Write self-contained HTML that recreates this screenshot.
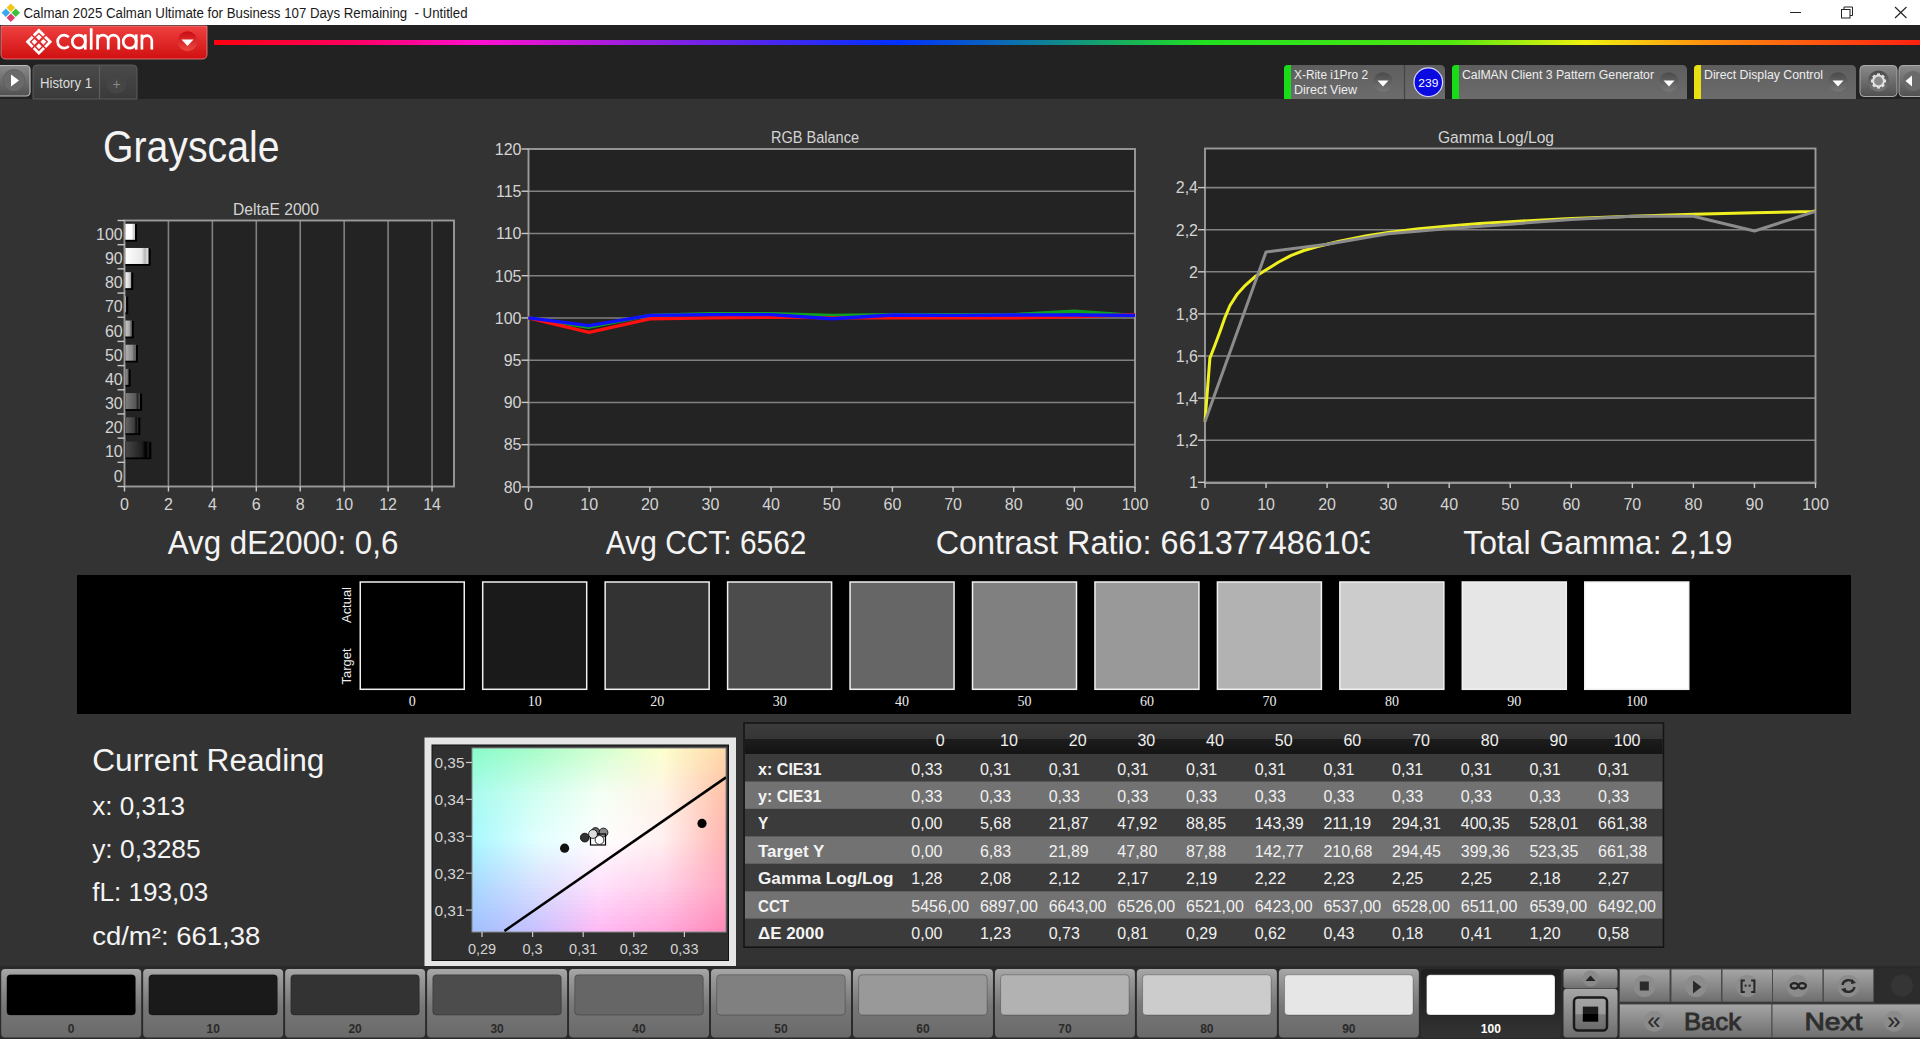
<!DOCTYPE html><html><head><meta charset="utf-8"><title>Calman</title><style>html,body{margin:0;padding:0;background:#333;overflow:hidden;width:1920px;height:1039px}svg{display:block;font-family:"Liberation Sans",sans-serif}</style></head><body><svg width="1920" height="1039" viewBox="0 0 1920 1039" font-family="'Liberation Sans', sans-serif"><defs><linearGradient id="ddred" x1="0" y1="0" x2="0" y2="1"><stop offset="0" stop-color="#c80c14"/><stop offset="1" stop-color="#ec4a40"/></linearGradient><linearGradient id="redg" x1="0" y1="0" x2="0" y2="1"><stop offset="0" stop-color="#ee4040"/><stop offset="0.5" stop-color="#e02828"/><stop offset="1" stop-color="#d01010"/></linearGradient><linearGradient id="rainbow" x1="0" y1="0" x2="1" y2="0"><stop offset="0" stop-color="#ff0010"/><stop offset="0.08" stop-color="#ff0060"/><stop offset="0.156" stop-color="#ff10d0"/><stop offset="0.256" stop-color="#9020e0"/><stop offset="0.4" stop-color="#0030ff"/><stop offset="0.494" stop-color="#108890"/><stop offset="0.58" stop-color="#20e020"/><stop offset="0.724" stop-color="#50e810"/><stop offset="0.804" stop-color="#f0f010"/><stop offset="0.875" stop-color="#ff9010"/><stop offset="1" stop-color="#ff2010"/></linearGradient><linearGradient id="btng" x1="0" y1="0" x2="0" y2="1"><stop offset="0" stop-color="#8a8a8a"/><stop offset="1" stop-color="#505050"/></linearGradient><linearGradient id="tabg" x1="0" y1="0" x2="0" y2="1"><stop offset="0" stop-color="#4a4a4a"/><stop offset="1" stop-color="#3a3a3a"/></linearGradient><linearGradient id="devg" x1="0" y1="0" x2="0" y2="1"><stop offset="0" stop-color="#5e5e5e"/><stop offset="1" stop-color="#6c6c6c"/></linearGradient><linearGradient id="ddg" x1="0" y1="0" x2="0" y2="1"><stop offset="0" stop-color="#4a4a4a"/><stop offset="1" stop-color="#777777"/></linearGradient><linearGradient id="bar100" x1="0" y1="0" x2="1" y2="0"><stop offset="0" stop-color="rgb(255,255,255)"/><stop offset="0.7" stop-color="rgb(255,255,255)"/><stop offset="0.85" stop-color="rgb(205,205,205)"/><stop offset="1" stop-color="rgb(255,255,255)"/></linearGradient><linearGradient id="bar90" x1="0" y1="0" x2="1" y2="0"><stop offset="0" stop-color="rgb(255,255,255)"/><stop offset="0.7" stop-color="rgb(232,232,232)"/><stop offset="0.85" stop-color="rgb(182,182,182)"/><stop offset="1" stop-color="rgb(232,232,232)"/></linearGradient><linearGradient id="bar80" x1="0" y1="0" x2="1" y2="0"><stop offset="0" stop-color="rgb(249,249,249)"/><stop offset="0.7" stop-color="rgb(209,209,209)"/><stop offset="0.85" stop-color="rgb(159,159,159)"/><stop offset="1" stop-color="rgb(209,209,209)"/></linearGradient><linearGradient id="bar70" x1="0" y1="0" x2="1" y2="0"><stop offset="0" stop-color="rgb(225,225,225)"/><stop offset="0.7" stop-color="rgb(185,185,185)"/><stop offset="0.85" stop-color="rgb(135,135,135)"/><stop offset="1" stop-color="rgb(185,185,185)"/></linearGradient><linearGradient id="bar60" x1="0" y1="0" x2="1" y2="0"><stop offset="0" stop-color="rgb(201,201,201)"/><stop offset="0.7" stop-color="rgb(161,161,161)"/><stop offset="0.85" stop-color="rgb(111,111,111)"/><stop offset="1" stop-color="rgb(161,161,161)"/></linearGradient><linearGradient id="bar50" x1="0" y1="0" x2="1" y2="0"><stop offset="0" stop-color="rgb(177,177,177)"/><stop offset="0.7" stop-color="rgb(137,137,137)"/><stop offset="0.85" stop-color="rgb(87,87,87)"/><stop offset="1" stop-color="rgb(137,137,137)"/></linearGradient><linearGradient id="bar40" x1="0" y1="0" x2="1" y2="0"><stop offset="0" stop-color="rgb(152,152,152)"/><stop offset="0.7" stop-color="rgb(112,112,112)"/><stop offset="0.85" stop-color="rgb(62,62,62)"/><stop offset="1" stop-color="rgb(112,112,112)"/></linearGradient><linearGradient id="bar30" x1="0" y1="0" x2="1" y2="0"><stop offset="0" stop-color="rgb(126,126,126)"/><stop offset="0.7" stop-color="rgb(86,86,86)"/><stop offset="0.85" stop-color="rgb(36,36,36)"/><stop offset="1" stop-color="rgb(86,86,86)"/></linearGradient><linearGradient id="bar20" x1="0" y1="0" x2="1" y2="0"><stop offset="0" stop-color="rgb(100,100,100)"/><stop offset="0.7" stop-color="rgb(60,60,60)"/><stop offset="0.85" stop-color="rgb(10,10,10)"/><stop offset="1" stop-color="rgb(60,60,60)"/></linearGradient><linearGradient id="bar10" x1="0" y1="0" x2="1" y2="0"><stop offset="0" stop-color="rgb(72,72,72)"/><stop offset="0.7" stop-color="rgb(32,32,32)"/><stop offset="0.85" stop-color="rgb(0,0,0)"/><stop offset="1" stop-color="rgb(32,32,32)"/></linearGradient><linearGradient id="cie0" x1="0" y1="0" x2="1" y2="0"><stop offset="0.0" stop-color="#89fcca"/><stop offset="0.25" stop-color="#aafcca"/><stop offset="0.5" stop-color="#d2ffd2"/><stop offset="0.75" stop-color="#fcffcd"/><stop offset="1.0" stop-color="#ffd7a8"/></linearGradient><linearGradient id="cie1" x1="0" y1="0" x2="1" y2="0"><stop offset="0.0" stop-color="#8cfccd"/><stop offset="0.25" stop-color="#adfccd"/><stop offset="0.5" stop-color="#d5ffd5"/><stop offset="0.75" stop-color="#fcfed0"/><stop offset="1.0" stop-color="#ffd5a8"/></linearGradient><linearGradient id="cie2" x1="0" y1="0" x2="1" y2="0"><stop offset="0.0" stop-color="#8ffcd0"/><stop offset="0.25" stop-color="#b1fdd1"/><stop offset="0.5" stop-color="#d8ffd8"/><stop offset="0.75" stop-color="#fdfdd2"/><stop offset="1.0" stop-color="#ffd3a8"/></linearGradient><linearGradient id="cie3" x1="0" y1="0" x2="1" y2="0"><stop offset="0.0" stop-color="#92fcd4"/><stop offset="0.25" stop-color="#b4fdd4"/><stop offset="0.5" stop-color="#dbffdb"/><stop offset="0.75" stop-color="#fdfcd5"/><stop offset="1.0" stop-color="#ffd1a8"/></linearGradient><linearGradient id="cie4" x1="0" y1="0" x2="1" y2="0"><stop offset="0.0" stop-color="#95fcd7"/><stop offset="0.25" stop-color="#b8fdd8"/><stop offset="0.5" stop-color="#deffde"/><stop offset="0.75" stop-color="#fdfbd7"/><stop offset="1.0" stop-color="#ffcfa8"/></linearGradient><linearGradient id="cie5" x1="0" y1="0" x2="1" y2="0"><stop offset="0.0" stop-color="#97fcdb"/><stop offset="0.25" stop-color="#bbfddb"/><stop offset="0.5" stop-color="#e1ffe1"/><stop offset="0.75" stop-color="#fdfad9"/><stop offset="1.0" stop-color="#ffcda8"/></linearGradient><linearGradient id="cie6" x1="0" y1="0" x2="1" y2="0"><stop offset="0.0" stop-color="#9afbde"/><stop offset="0.25" stop-color="#bffedf"/><stop offset="0.5" stop-color="#e4ffe4"/><stop offset="0.75" stop-color="#fef9dc"/><stop offset="1.0" stop-color="#ffcaa8"/></linearGradient><linearGradient id="cie7" x1="0" y1="0" x2="1" y2="0"><stop offset="0.0" stop-color="#9dfbe1"/><stop offset="0.25" stop-color="#c2fee2"/><stop offset="0.5" stop-color="#e7ffe7"/><stop offset="0.75" stop-color="#fef8de"/><stop offset="1.0" stop-color="#ffc8a8"/></linearGradient><linearGradient id="cie8" x1="0" y1="0" x2="1" y2="0"><stop offset="0.0" stop-color="#a0fbe5"/><stop offset="0.25" stop-color="#c6fee6"/><stop offset="0.5" stop-color="#ebffeb"/><stop offset="0.75" stop-color="#fef7e1"/><stop offset="1.0" stop-color="#ffc6a8"/></linearGradient><linearGradient id="cie9" x1="0" y1="0" x2="1" y2="0"><stop offset="0.0" stop-color="#a2fbe8"/><stop offset="0.25" stop-color="#c9fee9"/><stop offset="0.5" stop-color="#eeffee"/><stop offset="0.75" stop-color="#fef6e3"/><stop offset="1.0" stop-color="#ffc4a8"/></linearGradient><linearGradient id="cie10" x1="0" y1="0" x2="1" y2="0"><stop offset="0.0" stop-color="#a5fbec"/><stop offset="0.25" stop-color="#cdffed"/><stop offset="0.5" stop-color="#f1fff1"/><stop offset="0.75" stop-color="#fff5e6"/><stop offset="1.0" stop-color="#ffc2a8"/></linearGradient><linearGradient id="cie11" x1="0" y1="0" x2="1" y2="0"><stop offset="0.0" stop-color="#a8fbef"/><stop offset="0.25" stop-color="#d0fff0"/><stop offset="0.5" stop-color="#f4fff4"/><stop offset="0.75" stop-color="#fff4e8"/><stop offset="1.0" stop-color="#ffc0a8"/></linearGradient><linearGradient id="cie12" x1="0" y1="0" x2="1" y2="0"><stop offset="0.0" stop-color="#a8fbf0"/><stop offset="0.25" stop-color="#d1fff1"/><stop offset="0.5" stop-color="#f5fff5"/><stop offset="0.75" stop-color="#fff4e9"/><stop offset="1.0" stop-color="#ffbfa9"/></linearGradient><linearGradient id="cie13" x1="0" y1="0" x2="1" y2="0"><stop offset="0.0" stop-color="#a8faf2"/><stop offset="0.25" stop-color="#d3fff3"/><stop offset="0.5" stop-color="#f6fff6"/><stop offset="0.75" stop-color="#fff3e9"/><stop offset="1.0" stop-color="#ffbea9"/></linearGradient><linearGradient id="cie14" x1="0" y1="0" x2="1" y2="0"><stop offset="0.0" stop-color="#a8faf3"/><stop offset="0.25" stop-color="#d4fff4"/><stop offset="0.5" stop-color="#f7fff7"/><stop offset="0.75" stop-color="#fff3ea"/><stop offset="1.0" stop-color="#ffbdaa"/></linearGradient><linearGradient id="cie15" x1="0" y1="0" x2="1" y2="0"><stop offset="0.0" stop-color="#a8faf5"/><stop offset="0.25" stop-color="#d6fff5"/><stop offset="0.5" stop-color="#f8fff8"/><stop offset="0.75" stop-color="#fff3eb"/><stop offset="1.0" stop-color="#ffbcab"/></linearGradient><linearGradient id="cie16" x1="0" y1="0" x2="1" y2="0"><stop offset="0.0" stop-color="#a8faf6"/><stop offset="0.25" stop-color="#d7fff7"/><stop offset="0.5" stop-color="#f9fff9"/><stop offset="0.75" stop-color="#fff2eb"/><stop offset="1.0" stop-color="#ffbbab"/></linearGradient><linearGradient id="cie17" x1="0" y1="0" x2="1" y2="0"><stop offset="0.0" stop-color="#a8f9f7"/><stop offset="0.25" stop-color="#d8fff8"/><stop offset="0.5" stop-color="#fafffa"/><stop offset="0.75" stop-color="#fff2ec"/><stop offset="1.0" stop-color="#ffbaac"/></linearGradient><linearGradient id="cie18" x1="0" y1="0" x2="1" y2="0"><stop offset="0.0" stop-color="#a8f9f9"/><stop offset="0.25" stop-color="#dafff9"/><stop offset="0.5" stop-color="#fbfffb"/><stop offset="0.75" stop-color="#fff2ed"/><stop offset="1.0" stop-color="#ffb9ad"/></linearGradient><linearGradient id="cie19" x1="0" y1="0" x2="1" y2="0"><stop offset="0.0" stop-color="#a8f9fa"/><stop offset="0.25" stop-color="#dbfffa"/><stop offset="0.5" stop-color="#fcfffc"/><stop offset="0.75" stop-color="#fff1ee"/><stop offset="1.0" stop-color="#ffb8ae"/></linearGradient><linearGradient id="cie20" x1="0" y1="0" x2="1" y2="0"><stop offset="0.0" stop-color="#a8f9fc"/><stop offset="0.25" stop-color="#ddfffc"/><stop offset="0.5" stop-color="#fdfffd"/><stop offset="0.75" stop-color="#fff1ee"/><stop offset="1.0" stop-color="#ffb7ae"/></linearGradient><linearGradient id="cie21" x1="0" y1="0" x2="1" y2="0"><stop offset="0.0" stop-color="#a8f8fd"/><stop offset="0.25" stop-color="#defffd"/><stop offset="0.5" stop-color="#fefffe"/><stop offset="0.75" stop-color="#fff1ef"/><stop offset="1.0" stop-color="#ffb6af"/></linearGradient><linearGradient id="cie22" x1="0" y1="0" x2="1" y2="0"><stop offset="0.0" stop-color="#a8f8fe"/><stop offset="0.25" stop-color="#dffffe"/><stop offset="0.5" stop-color="#ffffff"/><stop offset="0.75" stop-color="#fff0f0"/><stop offset="1.0" stop-color="#ffb5b0"/></linearGradient><linearGradient id="cie23" x1="0" y1="0" x2="1" y2="0"><stop offset="0.0" stop-color="#a8f7ff"/><stop offset="0.25" stop-color="#e0feff"/><stop offset="0.5" stop-color="#fffeff"/><stop offset="0.75" stop-color="#ffeff0"/><stop offset="1.0" stop-color="#ffb3b1"/></linearGradient><linearGradient id="cie24" x1="0" y1="0" x2="1" y2="0"><stop offset="0.0" stop-color="#a8f4ff"/><stop offset="0.25" stop-color="#dffbff"/><stop offset="0.5" stop-color="#fffbff"/><stop offset="0.75" stop-color="#ffecef"/><stop offset="1.0" stop-color="#ffb2b2"/></linearGradient><linearGradient id="cie25" x1="0" y1="0" x2="1" y2="0"><stop offset="0.0" stop-color="#a8f1ff"/><stop offset="0.25" stop-color="#def8ff"/><stop offset="0.5" stop-color="#fff8fe"/><stop offset="0.75" stop-color="#ffe9ee"/><stop offset="1.0" stop-color="#ffb1b3"/></linearGradient><linearGradient id="cie26" x1="0" y1="0" x2="1" y2="0"><stop offset="0.0" stop-color="#a8eeff"/><stop offset="0.25" stop-color="#def6ff"/><stop offset="0.5" stop-color="#fff6fe"/><stop offset="0.75" stop-color="#ffe6ee"/><stop offset="1.0" stop-color="#ffb0b5"/></linearGradient><linearGradient id="cie27" x1="0" y1="0" x2="1" y2="0"><stop offset="0.0" stop-color="#a8ebff"/><stop offset="0.25" stop-color="#ddf3ff"/><stop offset="0.5" stop-color="#fff3fe"/><stop offset="0.75" stop-color="#ffe3ed"/><stop offset="1.0" stop-color="#ffafb6"/></linearGradient><linearGradient id="cie28" x1="0" y1="0" x2="1" y2="0"><stop offset="0.0" stop-color="#a8e9ff"/><stop offset="0.25" stop-color="#dcf0ff"/><stop offset="0.5" stop-color="#fff0fe"/><stop offset="0.75" stop-color="#ffe1ec"/><stop offset="1.0" stop-color="#ffaeb8"/></linearGradient><linearGradient id="cie29" x1="0" y1="0" x2="1" y2="0"><stop offset="0.0" stop-color="#a8e6ff"/><stop offset="0.25" stop-color="#dbedff"/><stop offset="0.5" stop-color="#ffedfd"/><stop offset="0.75" stop-color="#ffdeeb"/><stop offset="1.0" stop-color="#ffadb9"/></linearGradient><linearGradient id="cie30" x1="0" y1="0" x2="1" y2="0"><stop offset="0.0" stop-color="#a8e3ff"/><stop offset="0.25" stop-color="#dbebff"/><stop offset="0.5" stop-color="#ffebfd"/><stop offset="0.75" stop-color="#ffdbeb"/><stop offset="1.0" stop-color="#ffacba"/></linearGradient><linearGradient id="cie31" x1="0" y1="0" x2="1" y2="0"><stop offset="0.0" stop-color="#a8e0ff"/><stop offset="0.25" stop-color="#dae8ff"/><stop offset="0.5" stop-color="#ffe8fd"/><stop offset="0.75" stop-color="#ffd8ea"/><stop offset="1.0" stop-color="#ffabbc"/></linearGradient><linearGradient id="cie32" x1="0" y1="0" x2="1" y2="0"><stop offset="0.0" stop-color="#a8deff"/><stop offset="0.25" stop-color="#d9e5ff"/><stop offset="0.5" stop-color="#ffe5fd"/><stop offset="0.75" stop-color="#ffd6e9"/><stop offset="1.0" stop-color="#ffaabd"/></linearGradient><linearGradient id="cie33" x1="0" y1="0" x2="1" y2="0"><stop offset="0.0" stop-color="#a8dbff"/><stop offset="0.25" stop-color="#d9e3ff"/><stop offset="0.5" stop-color="#ffe3fc"/><stop offset="0.75" stop-color="#ffd3e9"/><stop offset="1.0" stop-color="#ffa9bf"/></linearGradient><linearGradient id="cie34" x1="0" y1="0" x2="1" y2="0"><stop offset="0.0" stop-color="#a8d8ff"/><stop offset="0.25" stop-color="#d8e0ff"/><stop offset="0.5" stop-color="#ffe0fc"/><stop offset="0.75" stop-color="#ffd0e8"/><stop offset="1.0" stop-color="#ffa8c0"/></linearGradient><linearGradient id="cie35" x1="0" y1="0" x2="1" y2="0"><stop offset="0.0" stop-color="#a7d6ff"/><stop offset="0.25" stop-color="#d7ddff"/><stop offset="0.5" stop-color="#ffddfb"/><stop offset="0.75" stop-color="#ffcde7"/><stop offset="1.0" stop-color="#ffa5bf"/></linearGradient><linearGradient id="cie36" x1="0" y1="0" x2="1" y2="0"><stop offset="0.0" stop-color="#a7d4ff"/><stop offset="0.25" stop-color="#d5daff"/><stop offset="0.5" stop-color="#ffd9fb"/><stop offset="0.75" stop-color="#ffc9e6"/><stop offset="1.0" stop-color="#ffa2bf"/></linearGradient><linearGradient id="cie37" x1="0" y1="0" x2="1" y2="0"><stop offset="0.0" stop-color="#a6d2ff"/><stop offset="0.25" stop-color="#d4d8ff"/><stop offset="0.5" stop-color="#ffd6fa"/><stop offset="0.75" stop-color="#ffc6e5"/><stop offset="1.0" stop-color="#ffa0be"/></linearGradient><linearGradient id="cie38" x1="0" y1="0" x2="1" y2="0"><stop offset="0.0" stop-color="#a5d0ff"/><stop offset="0.25" stop-color="#d2d5ff"/><stop offset="0.5" stop-color="#ffd2f9"/><stop offset="0.75" stop-color="#ffc2e4"/><stop offset="1.0" stop-color="#ff9dbd"/></linearGradient><linearGradient id="cie39" x1="0" y1="0" x2="1" y2="0"><stop offset="0.0" stop-color="#a5ceff"/><stop offset="0.25" stop-color="#d1d2ff"/><stop offset="0.5" stop-color="#ffcff9"/><stop offset="0.75" stop-color="#ffbfe3"/><stop offset="1.0" stop-color="#ff9abd"/></linearGradient><linearGradient id="cie40" x1="0" y1="0" x2="1" y2="0"><stop offset="0.0" stop-color="#a4cbff"/><stop offset="0.25" stop-color="#d0cfff"/><stop offset="0.5" stop-color="#ffcbf8"/><stop offset="0.75" stop-color="#ffbbe2"/><stop offset="1.0" stop-color="#ff97bc"/></linearGradient><linearGradient id="cie41" x1="0" y1="0" x2="1" y2="0"><stop offset="0.0" stop-color="#a3c9ff"/><stop offset="0.25" stop-color="#cecdff"/><stop offset="0.5" stop-color="#ffc8f7"/><stop offset="0.75" stop-color="#ffb8e1"/><stop offset="1.0" stop-color="#ff95bb"/></linearGradient><linearGradient id="cie42" x1="0" y1="0" x2="1" y2="0"><stop offset="0.0" stop-color="#a2c7ff"/><stop offset="0.25" stop-color="#cdcaff"/><stop offset="0.5" stop-color="#ffc4f6"/><stop offset="0.75" stop-color="#ffb4e0"/><stop offset="1.0" stop-color="#ff92ba"/></linearGradient><linearGradient id="cie43" x1="0" y1="0" x2="1" y2="0"><stop offset="0.0" stop-color="#a2c5ff"/><stop offset="0.25" stop-color="#cbc7ff"/><stop offset="0.5" stop-color="#ffc1f6"/><stop offset="0.75" stop-color="#ffb1df"/><stop offset="1.0" stop-color="#ff8fba"/></linearGradient><linearGradient id="cie44" x1="0" y1="0" x2="1" y2="0"><stop offset="0.0" stop-color="#a1c3ff"/><stop offset="0.25" stop-color="#cac4ff"/><stop offset="0.5" stop-color="#ffbdf5"/><stop offset="0.75" stop-color="#ffadde"/><stop offset="1.0" stop-color="#ff8cb9"/></linearGradient><linearGradient id="cie45" x1="0" y1="0" x2="1" y2="0"><stop offset="0.0" stop-color="#a0c1ff"/><stop offset="0.25" stop-color="#c9c1ff"/><stop offset="0.5" stop-color="#ffbaf4"/><stop offset="0.75" stop-color="#ffaadd"/><stop offset="1.0" stop-color="#ff89b8"/></linearGradient><linearGradient id="thead" x1="0" y1="0" x2="0" y2="1"><stop offset="0" stop-color="#3c3c3c"/><stop offset="0.5" stop-color="#353535"/><stop offset="0.52" stop-color="#1c1c1c"/><stop offset="1" stop-color="#141414"/></linearGradient><linearGradient id="selg" x1="0" y1="0" x2="0" y2="1"><stop offset="0" stop-color="#1e1e1e"/><stop offset="0.5" stop-color="#252525"/><stop offset="1" stop-color="#333333"/></linearGradient><linearGradient id="bbtn" x1="0" y1="0" x2="0" y2="1"><stop offset="0" stop-color="#a8a8a8"/><stop offset="0.12" stop-color="#9a9a9a"/><stop offset="0.55" stop-color="#777"/><stop offset="1" stop-color="#6a6a6a"/></linearGradient><linearGradient id="cbtn" x1="0" y1="0" x2="0" y2="1"><stop offset="0" stop-color="#a6a6a6"/><stop offset="1" stop-color="#6e6e6e"/></linearGradient><linearGradient id="stopg" x1="0" y1="0" x2="0" y2="1"><stop offset="0" stop-color="#a4a4a4"/><stop offset="0.5" stop-color="#9a9a9a"/><stop offset="0.52" stop-color="#7c7c7c"/><stop offset="1" stop-color="#6a6a6a"/></linearGradient><linearGradient id="stopsq" x1="0" y1="0" x2="0" y2="1"><stop offset="0" stop-color="#1c1c1c"/><stop offset="0.5" stop-color="#1c1c1c"/><stop offset="0.52" stop-color="#000"/><stop offset="1" stop-color="#000"/></linearGradient></defs><rect x="0" y="0" width="1920" height="1039" fill="#333333" />
<rect x="0" y="0" width="1920" height="25" fill="#ffffff" />
<rect x="0" y="25" width="1920" height="74" fill="#222222" />
<g transform="translate(10.8,12.8) rotate(45)"><rect x="-6.5" y="-6.5" width="6" height="6" fill="#f5c518"/><rect x="0.5" y="-6.5" width="6" height="6" fill="#3ec23a"/><rect x="0.5" y="0.5" width="6" height="6" fill="#e23a6a"/><rect x="-6.5" y="0.5" width="6" height="6" fill="#3aa8e8"/></g>
<text x="23.5" y="17.7" font-size="14" fill="#1a1a1a" font-weight="normal" text-anchor="start" textLength="444" lengthAdjust="spacingAndGlyphs" style="white-space:pre">Calman 2025 Calman Ultimate for Business 107 Days Remaining  - Untitled</text>
<line x1="1790" y1="12.5" x2="1801" y2="12.5" stroke="#222" stroke-width="1" />
<rect x="1841.5" y="9.5" width="8.5" height="8.5" fill="none" stroke="#222" stroke-width="1"/>
<path d="M1844,9.5 V7 H1852.5 V15.5 H1850" fill="none" stroke="#222" stroke-width="1"/>
<line x1="1895" y1="7" x2="1906.5" y2="18" stroke="#222" stroke-width="1.1" />
<line x1="1906.5" y1="7" x2="1895" y2="18" stroke="#222" stroke-width="1.1" />
<path d="M1,26 H207 V54 Q207,59 202,59 H6 Q1,59 1,54 Z" fill="url(#redg)" stroke="#e88" stroke-width="0.8"/>
<g transform="translate(38.9,41.8) rotate(45)" fill="#fff"><path d="M0.75,9.4 H9.4 V0.75 H6.6 V6.6 H0.75 Z"/><path d="M-0.75,9.4 H-9.4 V0.75 H-6.6 V6.6 H-0.75 Z"/><path d="M0.75,-9.4 H9.4 V-0.75 H6.6 V-6.6 H0.75 Z"/><path d="M-0.75,-9.4 H-9.4 V-0.75 H-6.6 V-6.6 H-0.75 Z"/><rect x="1.1" y="1.1" width="4.1" height="4.1"/><rect x="-5.2" y="1.1" width="4.1" height="4.1"/><rect x="1.1" y="-5.2" width="4.1" height="4.1"/><rect x="-5.2" y="-5.2" width="4.1" height="4.1"/></g>
<g fill="none" stroke="#fff" stroke-width="2.7" stroke-linecap="butt"><path d="M68.8,37.1 A6.5,6.5 0 1 0 68.8,46.1"/><circle cx="78.8" cy="41.6" r="6.5"/><path d="M85.3,34.4 V49.6"/><path d="M91.2,28.2 V49.6"/><path d="M97.6,34.4 V49.6 M97.6,40.4 A5.3,5.3 0 0 1 108.2,40.4 V49.6 M108.2,40.4 A5.3,5.3 0 0 1 118.8,40.4 V49.6"/><circle cx="129.7" cy="41.6" r="6.5"/><path d="M136.2,34.4 V49.6"/><path d="M141.9,34.4 V49.6 M141.9,40.6 A4.95,4.95 0 0 1 151.8,40.6 V49.6"/></g>
<circle cx="187.5" cy="41.2" r="10" fill="url(#ddred)"/>
<path d="M181.5,39.5 H193.5 L187.5,46 Z" fill="#fff"/>
<rect x="214" y="40" width="1706" height="5" fill="url(#rainbow)" />
<rect x="-4" y="65.5" width="34" height="30.5" rx="4" fill="url(#btng)" stroke="#bbb" stroke-width="1.2"/>
<circle cx="14" cy="80.5" r="11" fill="#6a6a6a" stroke="#555" stroke-width="0.5"/>
<path d="M11,74.5 L19,80.5 L11,86.5 Z" fill="#fff"/>
<path d="M33,99 V69 Q33,65 37,65 H133 Q137,65 137,69 V99 Z" fill="url(#tabg)" stroke="#5a5a5a" stroke-width="1"/>
<line x1="99.5" y1="66" x2="99.5" y2="99" stroke="#5e5e5e" stroke-width="1.2" />
<text x="40" y="88" font-size="14" fill="#dcdcdc" font-weight="normal" text-anchor="start" textLength="52" lengthAdjust="spacingAndGlyphs" >History 1</text>
<circle cx="116.5" cy="84" r="10" fill="#454545"/>
<text x="116.5" y="89" font-size="14" fill="#888" font-weight="normal" text-anchor="middle" >+</text>
<path d="M1284,99 V69 Q1284,65 1288,65 H1440 Q1445,65 1445,70 V99 Z" fill="url(#devg)"/>
<path d="M1284,99 V69 Q1284,65 1288,65 H1291 V99 Z" fill="#18dc18"/>
<text x="1294" y="78.5" font-size="12" fill="#eeeeee" font-weight="normal" text-anchor="start" textLength="74" lengthAdjust="spacingAndGlyphs" >X-Rite i1Pro 2</text>
<text x="1294" y="94.3" font-size="12" fill="#eeeeee" font-weight="normal" text-anchor="start" textLength="63" lengthAdjust="spacingAndGlyphs" >Direct View</text>
<circle cx="1383" cy="82" r="9.8" fill="url(#ddg)"/>
<path d="M1377.5,80.6 H1388.5 L1383,86.6 Z" fill="#fff"/>
<line x1="1404.5" y1="65" x2="1404.5" y2="99" stroke="#444" stroke-width="1.2" />
<circle cx="1428.3" cy="82.2" r="14.3" fill="#0a0ae0" stroke="#d8d8ff" stroke-width="1.2"/>
<text x="1428.3" y="86.5" font-size="11.5" fill="#ffffff" font-weight="normal" text-anchor="middle" textLength="20" lengthAdjust="spacingAndGlyphs" >239</text>
<path d="M1452,99 V69 Q1452,65 1456,65 H1682 Q1687,65 1687,70 V99 Z" fill="url(#devg)"/>
<path d="M1452,99 V69 Q1452,65 1456,65 H1459 V99 Z" fill="#18dc18"/>
<text x="1462" y="78.5" font-size="12" fill="#eeeeee" font-weight="normal" text-anchor="start" textLength="192" lengthAdjust="spacingAndGlyphs" >CalMAN Client 3 Pattern Generator</text>
<circle cx="1669" cy="82" r="9.8" fill="url(#ddg)"/>
<path d="M1663.5,80.6 H1674.5 L1669,86.6 Z" fill="#fff"/>
<path d="M1694,99 V69 Q1694,65 1698,65 H1851 Q1856,65 1856,70 V99 Z" fill="url(#devg)"/>
<path d="M1694,99 V69 Q1694,65 1698,65 H1701 V99 Z" fill="#e8e010"/>
<text x="1704" y="78.5" font-size="12" fill="#eeeeee" font-weight="normal" text-anchor="start" textLength="119" lengthAdjust="spacingAndGlyphs" >Direct Display Control</text>
<circle cx="1838" cy="82" r="9.8" fill="url(#ddg)"/>
<path d="M1832.5,80.6 H1843.5 L1838,86.6 Z" fill="#fff"/>
<rect x="1860" y="65.5" width="37" height="31" rx="4" fill="url(#btng)" stroke="#aaa" stroke-width="1"/>
<circle cx="1878.5" cy="81" r="10.5" fill="url(#ddg)"/>
<g transform="translate(1878.5,81)" fill="#e0e0e0"><rect x="-1.5" y="-7.6" width="3" height="3.4" transform="rotate(0)"/><rect x="-1.5" y="-7.6" width="3" height="3.4" transform="rotate(45)"/><rect x="-1.5" y="-7.6" width="3" height="3.4" transform="rotate(90)"/><rect x="-1.5" y="-7.6" width="3" height="3.4" transform="rotate(135)"/><rect x="-1.5" y="-7.6" width="3" height="3.4" transform="rotate(180)"/><rect x="-1.5" y="-7.6" width="3" height="3.4" transform="rotate(225)"/><rect x="-1.5" y="-7.6" width="3" height="3.4" transform="rotate(270)"/><rect x="-1.5" y="-7.6" width="3" height="3.4" transform="rotate(315)"/><circle r="5.4" fill="#888" stroke="#e0e0e0" stroke-width="2"/></g>
<rect x="1899" y="65.5" width="30" height="31" rx="4" fill="url(#btng)" stroke="#aaa" stroke-width="1"/>
<circle cx="1913" cy="81" r="10" fill="#6a6a6a"/>
<path d="M1912,75.5 V86.5 L1905.5,81 Z" fill="#fff"/>
<text x="103" y="162.2" font-size="44" fill="#f4f4f4" font-weight="normal" text-anchor="start" textLength="176.5" lengthAdjust="spacingAndGlyphs" >Grayscale</text>
<text x="276" y="215" font-size="16" fill="#d4d4d4" font-weight="normal" text-anchor="middle" textLength="86" lengthAdjust="spacingAndGlyphs" >DeltaE 2000</text>
<rect x="124.5" y="220.5" width="329.5" height="266.0" fill="#232323" />
<line x1="168.43333333333334" y1="220.5" x2="168.43333333333334" y2="486.5" stroke="#818181" stroke-width="1.6" />
<line x1="212.36666666666667" y1="220.5" x2="212.36666666666667" y2="486.5" stroke="#818181" stroke-width="1.6" />
<line x1="256.3" y1="220.5" x2="256.3" y2="486.5" stroke="#818181" stroke-width="1.6" />
<line x1="300.23333333333335" y1="220.5" x2="300.23333333333335" y2="486.5" stroke="#818181" stroke-width="1.6" />
<line x1="344.16666666666663" y1="220.5" x2="344.16666666666663" y2="486.5" stroke="#818181" stroke-width="1.6" />
<line x1="388.1" y1="220.5" x2="388.1" y2="486.5" stroke="#818181" stroke-width="1.6" />
<line x1="432.03333333333336" y1="220.5" x2="432.03333333333336" y2="486.5" stroke="#818181" stroke-width="1.6" />
<rect x="124.5" y="220.5" width="329.5" height="266.0" fill="none" stroke="#9a9a9a" stroke-width="1.9"/>
<line x1="117.5" y1="220.5" x2="124.5" y2="220.5" stroke="#c8c8c8" stroke-width="1.4" />
<line x1="117.5" y1="244.6818181818182" x2="124.5" y2="244.6818181818182" stroke="#c8c8c8" stroke-width="1.4" />
<line x1="117.5" y1="268.8636363636364" x2="124.5" y2="268.8636363636364" stroke="#c8c8c8" stroke-width="1.4" />
<line x1="117.5" y1="293.04545454545456" x2="124.5" y2="293.04545454545456" stroke="#c8c8c8" stroke-width="1.4" />
<line x1="117.5" y1="317.22727272727275" x2="124.5" y2="317.22727272727275" stroke="#c8c8c8" stroke-width="1.4" />
<line x1="117.5" y1="341.40909090909093" x2="124.5" y2="341.40909090909093" stroke="#c8c8c8" stroke-width="1.4" />
<line x1="117.5" y1="365.5909090909091" x2="124.5" y2="365.5909090909091" stroke="#c8c8c8" stroke-width="1.4" />
<line x1="117.5" y1="389.77272727272725" x2="124.5" y2="389.77272727272725" stroke="#c8c8c8" stroke-width="1.4" />
<line x1="117.5" y1="413.9545454545455" x2="124.5" y2="413.9545454545455" stroke="#c8c8c8" stroke-width="1.4" />
<line x1="117.5" y1="438.1363636363636" x2="124.5" y2="438.1363636363636" stroke="#c8c8c8" stroke-width="1.4" />
<line x1="117.5" y1="462.31818181818187" x2="124.5" y2="462.31818181818187" stroke="#c8c8c8" stroke-width="1.4" />
<line x1="117.5" y1="486.5" x2="124.5" y2="486.5" stroke="#c8c8c8" stroke-width="1.4" />
<line x1="124.5" y1="486.5" x2="124.5" y2="491.5" stroke="#c8c8c8" stroke-width="1.4" />
<text x="124.5" y="510" font-size="16" fill="#d4d4d4" font-weight="normal" text-anchor="middle" >0</text>
<line x1="168.43333333333334" y1="486.5" x2="168.43333333333334" y2="491.5" stroke="#c8c8c8" stroke-width="1.4" />
<text x="168.43333333333334" y="510" font-size="16" fill="#d4d4d4" font-weight="normal" text-anchor="middle" >2</text>
<line x1="212.36666666666667" y1="486.5" x2="212.36666666666667" y2="491.5" stroke="#c8c8c8" stroke-width="1.4" />
<text x="212.36666666666667" y="510" font-size="16" fill="#d4d4d4" font-weight="normal" text-anchor="middle" >4</text>
<line x1="256.3" y1="486.5" x2="256.3" y2="491.5" stroke="#c8c8c8" stroke-width="1.4" />
<text x="256.3" y="510" font-size="16" fill="#d4d4d4" font-weight="normal" text-anchor="middle" >6</text>
<line x1="300.23333333333335" y1="486.5" x2="300.23333333333335" y2="491.5" stroke="#c8c8c8" stroke-width="1.4" />
<text x="300.23333333333335" y="510" font-size="16" fill="#d4d4d4" font-weight="normal" text-anchor="middle" >8</text>
<line x1="344.16666666666663" y1="486.5" x2="344.16666666666663" y2="491.5" stroke="#c8c8c8" stroke-width="1.4" />
<text x="344.16666666666663" y="510" font-size="16" fill="#d4d4d4" font-weight="normal" text-anchor="middle" >10</text>
<line x1="388.1" y1="486.5" x2="388.1" y2="491.5" stroke="#c8c8c8" stroke-width="1.4" />
<text x="388.1" y="510" font-size="16" fill="#d4d4d4" font-weight="normal" text-anchor="middle" >12</text>
<line x1="432.03333333333336" y1="486.5" x2="432.03333333333336" y2="491.5" stroke="#c8c8c8" stroke-width="1.4" />
<text x="432.03333333333336" y="510" font-size="16" fill="#d4d4d4" font-weight="normal" text-anchor="middle" >14</text>
<text x="122.7" y="239.79090909090908" font-size="16" fill="#d4d4d4" font-weight="normal" text-anchor="end" >100</text>
<rect x="125.5" y="224.1909090909091" width="11.540666666666667" height="17.4" fill="#000"/>
<rect x="125.3" y="223.79090909090908" width="9.540666666666667" height="16" fill="url(#bar100)"/>
<text x="122.7" y="263.97272727272724" font-size="16" fill="#d4d4d4" font-weight="normal" text-anchor="end" >90</text>
<rect x="125.5" y="248.37272727272725" width="25.16" height="17.4" fill="#000"/>
<rect x="125.3" y="247.97272727272724" width="23.16" height="16" fill="url(#bar90)"/>
<text x="122.7" y="288.1545454545454" font-size="16" fill="#d4d4d4" font-weight="normal" text-anchor="end" >80</text>
<rect x="125.5" y="272.55454545454546" width="7.806333333333334" height="17.4" fill="#000"/>
<rect x="125.3" y="272.1545454545454" width="5.806333333333334" height="16" fill="url(#bar80)"/>
<text x="122.7" y="312.3363636363636" font-size="16" fill="#d4d4d4" font-weight="normal" text-anchor="end" >70</text>
<rect x="125.5" y="296.73636363636365" width="2.7539999999999996" height="17.4" fill="#000"/>
<rect x="125.3" y="296.3363636363636" width="0.7539999999999996" height="16" fill="url(#bar70)"/>
<text x="122.7" y="336.5181818181818" font-size="16" fill="#d4d4d4" font-weight="normal" text-anchor="end" >60</text>
<rect x="125.5" y="320.91818181818184" width="8.245666666666667" height="17.4" fill="#000"/>
<rect x="125.3" y="320.5181818181818" width="6.245666666666666" height="16" fill="url(#bar60)"/>
<text x="122.7" y="360.7" font-size="16" fill="#d4d4d4" font-weight="normal" text-anchor="end" >50</text>
<rect x="125.5" y="345.1" width="12.419333333333334" height="17.4" fill="#000"/>
<rect x="125.3" y="344.7" width="10.419333333333334" height="16" fill="url(#bar50)"/>
<text x="122.7" y="384.8818181818182" font-size="16" fill="#d4d4d4" font-weight="normal" text-anchor="end" >40</text>
<rect x="125.5" y="369.2818181818182" width="5.170333333333333" height="17.4" fill="#000"/>
<rect x="125.3" y="368.8818181818182" width="3.170333333333333" height="16" fill="url(#bar40)"/>
<text x="122.7" y="409.06363636363636" font-size="16" fill="#d4d4d4" font-weight="normal" text-anchor="end" >30</text>
<rect x="125.5" y="393.4636363636364" width="16.593000000000004" height="17.4" fill="#000"/>
<rect x="125.3" y="393.06363636363636" width="14.593000000000004" height="16" fill="url(#bar30)"/>
<text x="122.7" y="433.24545454545455" font-size="16" fill="#d4d4d4" font-weight="normal" text-anchor="end" >20</text>
<rect x="125.5" y="417.6454545454546" width="14.835666666666668" height="17.4" fill="#000"/>
<rect x="125.3" y="417.24545454545455" width="12.835666666666668" height="16" fill="url(#bar20)"/>
<text x="122.7" y="457.42727272727274" font-size="16" fill="#d4d4d4" font-weight="normal" text-anchor="end" >10</text>
<rect x="125.5" y="441.82727272727277" width="25.819" height="17.4" fill="#000"/>
<rect x="125.3" y="441.42727272727274" width="23.819" height="16" fill="url(#bar10)"/>
<text x="122.7" y="481.6090909090909" font-size="16" fill="#d4d4d4" font-weight="normal" text-anchor="end" >0</text>
<text x="815" y="143.2" font-size="16" fill="#d4d4d4" font-weight="normal" text-anchor="middle" textLength="88" lengthAdjust="spacingAndGlyphs" >RGB Balance</text>
<rect x="528.5" y="149" width="606.5" height="337.9" fill="#232323" />
<line x1="528.5" y1="191.2375" x2="1135" y2="191.2375" stroke="#818181" stroke-width="1.6" />
<line x1="528.5" y1="233.475" x2="1135" y2="233.475" stroke="#818181" stroke-width="1.6" />
<line x1="528.5" y1="275.7125" x2="1135" y2="275.7125" stroke="#818181" stroke-width="1.6" />
<line x1="528.5" y1="317.95" x2="1135" y2="317.95" stroke="#818181" stroke-width="1.6" />
<line x1="528.5" y1="360.1875" x2="1135" y2="360.1875" stroke="#818181" stroke-width="1.6" />
<line x1="528.5" y1="402.42499999999995" x2="1135" y2="402.42499999999995" stroke="#818181" stroke-width="1.6" />
<line x1="528.5" y1="444.66249999999997" x2="1135" y2="444.66249999999997" stroke="#818181" stroke-width="1.6" />
<rect x="528.5" y="149" width="606.5" height="337.9" fill="none" stroke="#9a9a9a" stroke-width="1.9"/>
<line x1="521.5" y1="149.0" x2="528.5" y2="149.0" stroke="#c8c8c8" stroke-width="1.4" />
<text x="521.5" y="154.8" font-size="16" fill="#d4d4d4" font-weight="normal" text-anchor="end" >120</text>
<line x1="521.5" y1="191.2375" x2="528.5" y2="191.2375" stroke="#c8c8c8" stroke-width="1.4" />
<text x="521.5" y="197.03750000000002" font-size="16" fill="#d4d4d4" font-weight="normal" text-anchor="end" >115</text>
<line x1="521.5" y1="233.475" x2="528.5" y2="233.475" stroke="#c8c8c8" stroke-width="1.4" />
<text x="521.5" y="239.275" font-size="16" fill="#d4d4d4" font-weight="normal" text-anchor="end" >110</text>
<line x1="521.5" y1="275.7125" x2="528.5" y2="275.7125" stroke="#c8c8c8" stroke-width="1.4" />
<text x="521.5" y="281.5125" font-size="16" fill="#d4d4d4" font-weight="normal" text-anchor="end" >105</text>
<line x1="521.5" y1="317.95" x2="528.5" y2="317.95" stroke="#c8c8c8" stroke-width="1.4" />
<text x="521.5" y="323.75" font-size="16" fill="#d4d4d4" font-weight="normal" text-anchor="end" >100</text>
<line x1="521.5" y1="360.1875" x2="528.5" y2="360.1875" stroke="#c8c8c8" stroke-width="1.4" />
<text x="521.5" y="365.9875" font-size="16" fill="#d4d4d4" font-weight="normal" text-anchor="end" >95</text>
<line x1="521.5" y1="402.42499999999995" x2="528.5" y2="402.42499999999995" stroke="#c8c8c8" stroke-width="1.4" />
<text x="521.5" y="408.22499999999997" font-size="16" fill="#d4d4d4" font-weight="normal" text-anchor="end" >90</text>
<line x1="521.5" y1="444.66249999999997" x2="528.5" y2="444.66249999999997" stroke="#c8c8c8" stroke-width="1.4" />
<text x="521.5" y="450.4625" font-size="16" fill="#d4d4d4" font-weight="normal" text-anchor="end" >85</text>
<line x1="521.5" y1="486.9" x2="528.5" y2="486.9" stroke="#c8c8c8" stroke-width="1.4" />
<text x="521.5" y="492.7" font-size="16" fill="#d4d4d4" font-weight="normal" text-anchor="end" >80</text>
<line x1="528.5" y1="486.9" x2="528.5" y2="491.9" stroke="#c8c8c8" stroke-width="1.4" />
<text x="528.5" y="510" font-size="16" fill="#d4d4d4" font-weight="normal" text-anchor="middle" >0</text>
<line x1="589.15" y1="486.9" x2="589.15" y2="491.9" stroke="#c8c8c8" stroke-width="1.4" />
<text x="589.15" y="510" font-size="16" fill="#d4d4d4" font-weight="normal" text-anchor="middle" >10</text>
<line x1="649.8" y1="486.9" x2="649.8" y2="491.9" stroke="#c8c8c8" stroke-width="1.4" />
<text x="649.8" y="510" font-size="16" fill="#d4d4d4" font-weight="normal" text-anchor="middle" >20</text>
<line x1="710.45" y1="486.9" x2="710.45" y2="491.9" stroke="#c8c8c8" stroke-width="1.4" />
<text x="710.45" y="510" font-size="16" fill="#d4d4d4" font-weight="normal" text-anchor="middle" >30</text>
<line x1="771.1" y1="486.9" x2="771.1" y2="491.9" stroke="#c8c8c8" stroke-width="1.4" />
<text x="771.1" y="510" font-size="16" fill="#d4d4d4" font-weight="normal" text-anchor="middle" >40</text>
<line x1="831.75" y1="486.9" x2="831.75" y2="491.9" stroke="#c8c8c8" stroke-width="1.4" />
<text x="831.75" y="510" font-size="16" fill="#d4d4d4" font-weight="normal" text-anchor="middle" >50</text>
<line x1="892.4" y1="486.9" x2="892.4" y2="491.9" stroke="#c8c8c8" stroke-width="1.4" />
<text x="892.4" y="510" font-size="16" fill="#d4d4d4" font-weight="normal" text-anchor="middle" >60</text>
<line x1="953.05" y1="486.9" x2="953.05" y2="491.9" stroke="#c8c8c8" stroke-width="1.4" />
<text x="953.05" y="510" font-size="16" fill="#d4d4d4" font-weight="normal" text-anchor="middle" >70</text>
<line x1="1013.7" y1="486.9" x2="1013.7" y2="491.9" stroke="#c8c8c8" stroke-width="1.4" />
<text x="1013.7" y="510" font-size="16" fill="#d4d4d4" font-weight="normal" text-anchor="middle" >80</text>
<line x1="1074.35" y1="486.9" x2="1074.35" y2="491.9" stroke="#c8c8c8" stroke-width="1.4" />
<text x="1074.35" y="510" font-size="16" fill="#d4d4d4" font-weight="normal" text-anchor="middle" >90</text>
<line x1="1135.0" y1="486.9" x2="1135.0" y2="491.9" stroke="#c8c8c8" stroke-width="1.4" />
<text x="1135.0" y="510" font-size="16" fill="#d4d4d4" font-weight="normal" text-anchor="middle" >100</text>
<polyline points="528.5,317.9 589.1,327.2 649.8,315.4 710.5,313.7 771.1,313.7 831.8,315.4 892.4,314.6 953.0,314.6 1013.7,314.6 1074.3,311.2 1135.0,315.4" fill="none" stroke="#10a020" stroke-width="3.4" stroke-linejoin="round"/>
<polyline points="528.5,317.9 589.1,332.3 649.8,318.8 710.5,317.9 771.1,317.1 831.8,317.9 892.4,317.9 953.0,317.9 1013.7,317.9 1074.3,316.7 1135.0,314.6" fill="none" stroke="#ff1010" stroke-width="3.4" stroke-linejoin="round"/>
<polyline points="528.5,317.9 589.1,325.6 649.8,315.4 710.5,314.6 771.1,314.6 831.8,318.8 892.4,315.0 953.0,315.4 1013.7,315.0 1074.3,315.0 1135.0,315.4" fill="none" stroke="#1010ff" stroke-width="3.4" stroke-linejoin="round"/>
<text x="1496" y="143.2" font-size="16" fill="#d4d4d4" font-weight="normal" text-anchor="middle" textLength="116" lengthAdjust="spacingAndGlyphs" >Gamma Log/Log</text>
<rect x="1205" y="148.5" width="610.5" height="334.5" fill="#232323" />
<line x1="1205" y1="440.20000000000005" x2="1815.5" y2="440.20000000000005" stroke="#818181" stroke-width="1.6" />
<line x1="1205" y1="398.1" x2="1815.5" y2="398.1" stroke="#818181" stroke-width="1.6" />
<line x1="1205" y1="356.0" x2="1815.5" y2="356.0" stroke="#818181" stroke-width="1.6" />
<line x1="1205" y1="313.9" x2="1815.5" y2="313.9" stroke="#818181" stroke-width="1.6" />
<line x1="1205" y1="271.8" x2="1815.5" y2="271.8" stroke="#818181" stroke-width="1.6" />
<line x1="1205" y1="229.69999999999996" x2="1815.5" y2="229.69999999999996" stroke="#818181" stroke-width="1.6" />
<line x1="1205" y1="187.60000000000002" x2="1815.5" y2="187.60000000000002" stroke="#818181" stroke-width="1.6" />
<line x1="1205" y1="482.3" x2="1815.5" y2="482.3" stroke="#818181" stroke-width="1.6" />
<rect x="1205" y="148.5" width="610.5" height="334.5" fill="none" stroke="#9a9a9a" stroke-width="1.9"/>
<line x1="1198" y1="482.3" x2="1205" y2="482.3" stroke="#c8c8c8" stroke-width="1.4" />
<text x="1198" y="488.1" font-size="16" fill="#d4d4d4" font-weight="normal" text-anchor="end" >1</text>
<line x1="1198" y1="440.20000000000005" x2="1205" y2="440.20000000000005" stroke="#c8c8c8" stroke-width="1.4" />
<text x="1198" y="446.00000000000006" font-size="16" fill="#d4d4d4" font-weight="normal" text-anchor="end" >1,2</text>
<line x1="1198" y1="398.1" x2="1205" y2="398.1" stroke="#c8c8c8" stroke-width="1.4" />
<text x="1198" y="403.90000000000003" font-size="16" fill="#d4d4d4" font-weight="normal" text-anchor="end" >1,4</text>
<line x1="1198" y1="356.0" x2="1205" y2="356.0" stroke="#c8c8c8" stroke-width="1.4" />
<text x="1198" y="361.8" font-size="16" fill="#d4d4d4" font-weight="normal" text-anchor="end" >1,6</text>
<line x1="1198" y1="313.9" x2="1205" y2="313.9" stroke="#c8c8c8" stroke-width="1.4" />
<text x="1198" y="319.7" font-size="16" fill="#d4d4d4" font-weight="normal" text-anchor="end" >1,8</text>
<line x1="1198" y1="271.8" x2="1205" y2="271.8" stroke="#c8c8c8" stroke-width="1.4" />
<text x="1198" y="277.6" font-size="16" fill="#d4d4d4" font-weight="normal" text-anchor="end" >2</text>
<line x1="1198" y1="229.69999999999996" x2="1205" y2="229.69999999999996" stroke="#c8c8c8" stroke-width="1.4" />
<text x="1198" y="235.49999999999997" font-size="16" fill="#d4d4d4" font-weight="normal" text-anchor="end" >2,2</text>
<line x1="1198" y1="187.60000000000002" x2="1205" y2="187.60000000000002" stroke="#c8c8c8" stroke-width="1.4" />
<text x="1198" y="193.40000000000003" font-size="16" fill="#d4d4d4" font-weight="normal" text-anchor="end" >2,4</text>
<line x1="1205.0" y1="483" x2="1205.0" y2="488" stroke="#c8c8c8" stroke-width="1.4" />
<text x="1205.0" y="510" font-size="16" fill="#d4d4d4" font-weight="normal" text-anchor="middle" >0</text>
<line x1="1266.05" y1="483" x2="1266.05" y2="488" stroke="#c8c8c8" stroke-width="1.4" />
<text x="1266.05" y="510" font-size="16" fill="#d4d4d4" font-weight="normal" text-anchor="middle" >10</text>
<line x1="1327.1" y1="483" x2="1327.1" y2="488" stroke="#c8c8c8" stroke-width="1.4" />
<text x="1327.1" y="510" font-size="16" fill="#d4d4d4" font-weight="normal" text-anchor="middle" >20</text>
<line x1="1388.15" y1="483" x2="1388.15" y2="488" stroke="#c8c8c8" stroke-width="1.4" />
<text x="1388.15" y="510" font-size="16" fill="#d4d4d4" font-weight="normal" text-anchor="middle" >30</text>
<line x1="1449.2" y1="483" x2="1449.2" y2="488" stroke="#c8c8c8" stroke-width="1.4" />
<text x="1449.2" y="510" font-size="16" fill="#d4d4d4" font-weight="normal" text-anchor="middle" >40</text>
<line x1="1510.25" y1="483" x2="1510.25" y2="488" stroke="#c8c8c8" stroke-width="1.4" />
<text x="1510.25" y="510" font-size="16" fill="#d4d4d4" font-weight="normal" text-anchor="middle" >50</text>
<line x1="1571.3" y1="483" x2="1571.3" y2="488" stroke="#c8c8c8" stroke-width="1.4" />
<text x="1571.3" y="510" font-size="16" fill="#d4d4d4" font-weight="normal" text-anchor="middle" >60</text>
<line x1="1632.35" y1="483" x2="1632.35" y2="488" stroke="#c8c8c8" stroke-width="1.4" />
<text x="1632.35" y="510" font-size="16" fill="#d4d4d4" font-weight="normal" text-anchor="middle" >70</text>
<line x1="1693.4" y1="483" x2="1693.4" y2="488" stroke="#c8c8c8" stroke-width="1.4" />
<text x="1693.4" y="510" font-size="16" fill="#d4d4d4" font-weight="normal" text-anchor="middle" >80</text>
<line x1="1754.4499999999998" y1="483" x2="1754.4499999999998" y2="488" stroke="#c8c8c8" stroke-width="1.4" />
<text x="1754.4499999999998" y="510" font-size="16" fill="#d4d4d4" font-weight="normal" text-anchor="middle" >90</text>
<line x1="1815.5" y1="483" x2="1815.5" y2="488" stroke="#c8c8c8" stroke-width="1.4" />
<text x="1815.5" y="510" font-size="16" fill="#d4d4d4" font-weight="normal" text-anchor="middle" >100</text>
<polyline points="1205.0,421.5 1209.9,358.1 1214.8,345.5 1220.3,330.7 1225.1,317.1 1230.0,305.5 1237.4,293.9 1245.3,285.3 1255.1,276.6 1265.4,270.3 1278.3,262.3 1290.8,255.6 1303.9,250.5 1316.7,246.8 1339.3,241.3 1366.8,235.8 1388.2,232.4 1418.7,228.8 1449.2,226.0 1479.7,223.6 1510.2,221.7 1571.3,218.5 1632.3,216.2 1693.4,214.3 1754.5,212.7 1812.4,211.5 1815.5,211.0" fill="none" stroke="#f0f020" stroke-width="3" stroke-linejoin="round"/>
<polyline points="1205.0,421.5 1266.0,252.0 1327.1,244.2 1388.2,233.7 1449.2,228.6 1510.2,224.2 1571.3,219.4 1632.3,216.2 1693.4,216.2 1754.5,231.0 1815.5,211.4" fill="none" stroke="#8c8c8c" stroke-width="3" stroke-linejoin="round"/>
<text x="167.8" y="554.4" font-size="33" fill="#f4f4f4" font-weight="normal" text-anchor="start" textLength="230.5" lengthAdjust="spacingAndGlyphs" >Avg dE2000: 0,6</text>
<text x="605.8" y="554.4" font-size="33" fill="#f4f4f4" font-weight="normal" text-anchor="start" textLength="200.7" lengthAdjust="spacingAndGlyphs" >Avg CCT: 6562</text>
<clipPath id="crclip"><rect x="900" y="520" width="469.5" height="50"/></clipPath>
<text x="935.7" y="554.4" font-size="33" fill="#f4f4f4" font-weight="normal" text-anchor="start" textLength="441" lengthAdjust="spacingAndGlyphs" clip-path="url(#crclip)">Contrast Ratio: 661377486103</text>
<text x="1463.3" y="554.4" font-size="33" fill="#f4f4f4" font-weight="normal" text-anchor="start" textLength="269.2" lengthAdjust="spacingAndGlyphs" >Total Gamma: 2,19</text>
<rect x="77" y="575" width="1774" height="139" fill="#000000" />
<text transform="translate(351.3,623) rotate(-90)" font-size="12" fill="#eee" textLength="36" lengthAdjust="spacingAndGlyphs">Actual</text>
<text transform="translate(351.3,684.5) rotate(-90)" font-size="12" fill="#eee" textLength="36" lengthAdjust="spacingAndGlyphs">Target</text>
<rect x="360.25" y="582" width="104" height="107.3" fill="rgb(0,0,0)" stroke="#f0f0f0" stroke-width="1.5"/>
<text x="412.3" y="706" font-size="14" fill="#eeeeee" font-weight="normal" text-anchor="middle" font-family="Liberation Serif, serif">0</text>
<rect x="482.7" y="582" width="104" height="107.3" fill="rgb(26,26,26)" stroke="#f0f0f0" stroke-width="1.5"/>
<text x="534.75" y="706" font-size="14" fill="#eeeeee" font-weight="normal" text-anchor="middle" font-family="Liberation Serif, serif">10</text>
<rect x="605.15" y="582" width="104" height="107.3" fill="rgb(51,51,51)" stroke="#f0f0f0" stroke-width="1.5"/>
<text x="657.1999999999999" y="706" font-size="14" fill="#eeeeee" font-weight="normal" text-anchor="middle" font-family="Liberation Serif, serif">20</text>
<rect x="727.6" y="582" width="104" height="107.3" fill="rgb(76,76,76)" stroke="#f0f0f0" stroke-width="1.5"/>
<text x="779.65" y="706" font-size="14" fill="#eeeeee" font-weight="normal" text-anchor="middle" font-family="Liberation Serif, serif">30</text>
<rect x="850.05" y="582" width="104" height="107.3" fill="rgb(102,102,102)" stroke="#f0f0f0" stroke-width="1.5"/>
<text x="902.0999999999999" y="706" font-size="14" fill="#eeeeee" font-weight="normal" text-anchor="middle" font-family="Liberation Serif, serif">40</text>
<rect x="972.5" y="582" width="104" height="107.3" fill="rgb(128,128,128)" stroke="#f0f0f0" stroke-width="1.5"/>
<text x="1024.55" y="706" font-size="14" fill="#eeeeee" font-weight="normal" text-anchor="middle" font-family="Liberation Serif, serif">50</text>
<rect x="1094.95" y="582" width="104" height="107.3" fill="rgb(153,153,153)" stroke="#f0f0f0" stroke-width="1.5"/>
<text x="1147.0" y="706" font-size="14" fill="#eeeeee" font-weight="normal" text-anchor="middle" font-family="Liberation Serif, serif">60</text>
<rect x="1217.4" y="582" width="104" height="107.3" fill="rgb(178,178,178)" stroke="#f0f0f0" stroke-width="1.5"/>
<text x="1269.45" y="706" font-size="14" fill="#eeeeee" font-weight="normal" text-anchor="middle" font-family="Liberation Serif, serif">70</text>
<rect x="1339.85" y="582" width="104" height="107.3" fill="rgb(204,204,204)" stroke="#f0f0f0" stroke-width="1.5"/>
<text x="1391.8999999999999" y="706" font-size="14" fill="#eeeeee" font-weight="normal" text-anchor="middle" font-family="Liberation Serif, serif">80</text>
<rect x="1462.3" y="582" width="104" height="107.3" fill="rgb(230,230,230)" stroke="#f0f0f0" stroke-width="1.5"/>
<text x="1514.35" y="706" font-size="14" fill="#eeeeee" font-weight="normal" text-anchor="middle" font-family="Liberation Serif, serif">90</text>
<rect x="1584.75" y="582" width="104" height="107.3" fill="rgb(255,255,255)" stroke="#f0f0f0" stroke-width="1.5"/>
<text x="1636.8" y="706" font-size="14" fill="#eeeeee" font-weight="normal" text-anchor="middle" font-family="Liberation Serif, serif">100</text>
<text x="92.2" y="771" font-size="31" fill="#f4f4f4" font-weight="normal" text-anchor="start" textLength="232.3" lengthAdjust="spacingAndGlyphs" >Current Reading</text>
<text x="92.2" y="815.2" font-size="25" fill="#f4f4f4" font-weight="normal" text-anchor="start" textLength="92.8" lengthAdjust="spacingAndGlyphs" >x: 0,313</text>
<text x="92.2" y="858.33" font-size="25" fill="#f4f4f4" font-weight="normal" text-anchor="start" textLength="108.4" lengthAdjust="spacingAndGlyphs" >y: 0,3285</text>
<text x="92.2" y="901.46" font-size="25" fill="#f4f4f4" font-weight="normal" text-anchor="start" textLength="116.1" lengthAdjust="spacingAndGlyphs" >fL: 193,03</text>
<text x="92.2" y="944.59" font-size="25" fill="#f4f4f4" font-weight="normal" text-anchor="start" textLength="168.1" lengthAdjust="spacingAndGlyphs" >cd/m²: 661,38</text>
<rect x="424.5" y="737.5" width="311.5" height="228.5" fill="#e6e6e6" />
<rect x="431.5" y="744.5" width="297.5" height="216.5" fill="#111111" />
<rect x="432.5" y="745.5" width="295.5" height="214.5" fill="#303030" />
<g shape-rendering="crispEdges"><rect x="472" y="748" width="254" height="4" fill="url(#cie0)"/><rect x="472" y="752" width="254" height="4" fill="url(#cie1)"/><rect x="472" y="756" width="254" height="4" fill="url(#cie2)"/><rect x="472" y="760" width="254" height="4" fill="url(#cie3)"/><rect x="472" y="764" width="254" height="4" fill="url(#cie4)"/><rect x="472" y="768" width="254" height="4" fill="url(#cie5)"/><rect x="472" y="772" width="254" height="4" fill="url(#cie6)"/><rect x="472" y="776" width="254" height="4" fill="url(#cie7)"/><rect x="472" y="780" width="254" height="4" fill="url(#cie8)"/><rect x="472" y="784" width="254" height="4" fill="url(#cie9)"/><rect x="472" y="788" width="254" height="4" fill="url(#cie10)"/><rect x="472" y="792" width="254" height="4" fill="url(#cie11)"/><rect x="472" y="796" width="254" height="4" fill="url(#cie12)"/><rect x="472" y="800" width="254" height="4" fill="url(#cie13)"/><rect x="472" y="804" width="254" height="4" fill="url(#cie14)"/><rect x="472" y="808" width="254" height="4" fill="url(#cie15)"/><rect x="472" y="812" width="254" height="4" fill="url(#cie16)"/><rect x="472" y="816" width="254" height="4" fill="url(#cie17)"/><rect x="472" y="820" width="254" height="4" fill="url(#cie18)"/><rect x="472" y="824" width="254" height="4" fill="url(#cie19)"/><rect x="472" y="828" width="254" height="4" fill="url(#cie20)"/><rect x="472" y="832" width="254" height="4" fill="url(#cie21)"/><rect x="472" y="836" width="254" height="4" fill="url(#cie22)"/><rect x="472" y="840" width="254" height="4" fill="url(#cie23)"/><rect x="472" y="844" width="254" height="4" fill="url(#cie24)"/><rect x="472" y="848" width="254" height="4" fill="url(#cie25)"/><rect x="472" y="852" width="254" height="4" fill="url(#cie26)"/><rect x="472" y="856" width="254" height="4" fill="url(#cie27)"/><rect x="472" y="860" width="254" height="4" fill="url(#cie28)"/><rect x="472" y="864" width="254" height="4" fill="url(#cie29)"/><rect x="472" y="868" width="254" height="4" fill="url(#cie30)"/><rect x="472" y="872" width="254" height="4" fill="url(#cie31)"/><rect x="472" y="876" width="254" height="4" fill="url(#cie32)"/><rect x="472" y="880" width="254" height="4" fill="url(#cie33)"/><rect x="472" y="884" width="254" height="4" fill="url(#cie34)"/><rect x="472" y="888" width="254" height="4" fill="url(#cie35)"/><rect x="472" y="892" width="254" height="4" fill="url(#cie36)"/><rect x="472" y="896" width="254" height="4" fill="url(#cie37)"/><rect x="472" y="900" width="254" height="4" fill="url(#cie38)"/><rect x="472" y="904" width="254" height="4" fill="url(#cie39)"/><rect x="472" y="908" width="254" height="4" fill="url(#cie40)"/><rect x="472" y="912" width="254" height="4" fill="url(#cie41)"/><rect x="472" y="916" width="254" height="4" fill="url(#cie42)"/><rect x="472" y="920" width="254" height="4" fill="url(#cie43)"/><rect x="472" y="924" width="254" height="4" fill="url(#cie44)"/><rect x="472" y="928" width="254" height="4" fill="url(#cie45)"/></g>
<rect x="472" y="748" width="254" height="184" fill="none" stroke="#888" stroke-width="1"/>
<line x1="466" y1="762.5" x2="472" y2="762.5" stroke="#ccc" stroke-width="1.2" />
<text x="434.5" y="768.0" font-size="15" fill="#d4d4d4" font-weight="normal" text-anchor="start" textLength="30" lengthAdjust="spacingAndGlyphs" >0,35</text>
<line x1="466" y1="799.4" x2="472" y2="799.4" stroke="#ccc" stroke-width="1.2" />
<text x="434.5" y="804.9" font-size="15" fill="#d4d4d4" font-weight="normal" text-anchor="start" textLength="30" lengthAdjust="spacingAndGlyphs" >0,34</text>
<line x1="466" y1="836.3" x2="472" y2="836.3" stroke="#ccc" stroke-width="1.2" />
<text x="434.5" y="841.8" font-size="15" fill="#d4d4d4" font-weight="normal" text-anchor="start" textLength="30" lengthAdjust="spacingAndGlyphs" >0,33</text>
<line x1="466" y1="873.2" x2="472" y2="873.2" stroke="#ccc" stroke-width="1.2" />
<text x="434.5" y="878.7" font-size="15" fill="#d4d4d4" font-weight="normal" text-anchor="start" textLength="30" lengthAdjust="spacingAndGlyphs" >0,32</text>
<line x1="466" y1="910.1" x2="472" y2="910.1" stroke="#ccc" stroke-width="1.2" />
<text x="434.5" y="915.6" font-size="15" fill="#d4d4d4" font-weight="normal" text-anchor="start" textLength="30" lengthAdjust="spacingAndGlyphs" >0,31</text>
<line x1="482.0" y1="932" x2="482.0" y2="937" stroke="#ccc" stroke-width="1.2" />
<text x="482.0" y="953.5" font-size="14.5" fill="#d4d4d4" font-weight="normal" text-anchor="middle" >0,29</text>
<line x1="532.6" y1="932" x2="532.6" y2="937" stroke="#ccc" stroke-width="1.2" />
<text x="532.6" y="953.5" font-size="14.5" fill="#d4d4d4" font-weight="normal" text-anchor="middle" >0,3</text>
<line x1="583.2" y1="932" x2="583.2" y2="937" stroke="#ccc" stroke-width="1.2" />
<text x="583.2" y="953.5" font-size="14.5" fill="#d4d4d4" font-weight="normal" text-anchor="middle" >0,31</text>
<line x1="633.8" y1="932" x2="633.8" y2="937" stroke="#ccc" stroke-width="1.2" />
<text x="633.8" y="953.5" font-size="14.5" fill="#d4d4d4" font-weight="normal" text-anchor="middle" >0,32</text>
<line x1="684.4" y1="932" x2="684.4" y2="937" stroke="#ccc" stroke-width="1.2" />
<text x="684.4" y="953.5" font-size="14.5" fill="#d4d4d4" font-weight="normal" text-anchor="middle" >0,33</text>
<clipPath id="cieclip"><rect x="472" y="748" width="254" height="184"/></clipPath>
<line x1="504.4" y1="931" x2="726" y2="777.3" stroke="#000" stroke-width="2.6" clip-path="url(#cieclip)"/>
<circle cx="564.6" cy="848.2" r="4.6" fill="#111"/>
<circle cx="702" cy="823.4" r="4.6" fill="#000"/>
<circle cx="584.8" cy="837.6" r="4.4" fill="#333" stroke="#000" stroke-width="0.8"/>
<circle cx="595.5" cy="832" r="4.4" fill="#666" stroke="#000" stroke-width="0.8"/>
<circle cx="603.5" cy="832.5" r="4.4" fill="#888" stroke="#000" stroke-width="0.8"/>
<rect x="590.5" y="834" width="15" height="11" fill="none" stroke="#000" stroke-width="1.2"/>
<circle cx="593" cy="834" r="4.4" fill="#ddd" stroke="#000" stroke-width="0.8"/>
<circle cx="599.5" cy="840" r="4.4" fill="#fff" stroke="#000" stroke-width="0.8"/>
<rect x="745" y="723.5" width="917.5" height="30.5" fill="url(#thead)" />
<text x="940.3" y="745.5" font-size="16" fill="#f0f0f0" font-weight="normal" text-anchor="middle" >0</text>
<text x="1008.98" y="745.5" font-size="16" fill="#f0f0f0" font-weight="normal" text-anchor="middle" >10</text>
<text x="1077.66" y="745.5" font-size="16" fill="#f0f0f0" font-weight="normal" text-anchor="middle" >20</text>
<text x="1146.34" y="745.5" font-size="16" fill="#f0f0f0" font-weight="normal" text-anchor="middle" >30</text>
<text x="1215.02" y="745.5" font-size="16" fill="#f0f0f0" font-weight="normal" text-anchor="middle" >40</text>
<text x="1283.7" y="745.5" font-size="16" fill="#f0f0f0" font-weight="normal" text-anchor="middle" >50</text>
<text x="1352.3799999999999" y="745.5" font-size="16" fill="#f0f0f0" font-weight="normal" text-anchor="middle" >60</text>
<text x="1421.06" y="745.5" font-size="16" fill="#f0f0f0" font-weight="normal" text-anchor="middle" >70</text>
<text x="1489.74" y="745.5" font-size="16" fill="#f0f0f0" font-weight="normal" text-anchor="middle" >80</text>
<text x="1558.42" y="745.5" font-size="16" fill="#f0f0f0" font-weight="normal" text-anchor="middle" >90</text>
<text x="1627.1000000000001" y="745.5" font-size="16" fill="#f0f0f0" font-weight="normal" text-anchor="middle" >100</text>
<rect x="745" y="754.0" width="917.5" height="27.46" fill="#3b3b3b" />
<text x="758" y="774.5" font-size="16" fill="#f4f4f4" font-weight="bold" text-anchor="start" textLength="63.5" lengthAdjust="spacingAndGlyphs" >x: CIE31</text>
<text x="911.3" y="774.5" font-size="16" fill="#f0f0f0" font-weight="normal" text-anchor="start" >0,33</text>
<text x="979.98" y="774.5" font-size="16" fill="#f0f0f0" font-weight="normal" text-anchor="start" >0,31</text>
<text x="1048.66" y="774.5" font-size="16" fill="#f0f0f0" font-weight="normal" text-anchor="start" >0,31</text>
<text x="1117.34" y="774.5" font-size="16" fill="#f0f0f0" font-weight="normal" text-anchor="start" >0,31</text>
<text x="1186.02" y="774.5" font-size="16" fill="#f0f0f0" font-weight="normal" text-anchor="start" >0,31</text>
<text x="1254.7" y="774.5" font-size="16" fill="#f0f0f0" font-weight="normal" text-anchor="start" >0,31</text>
<text x="1323.3799999999999" y="774.5" font-size="16" fill="#f0f0f0" font-weight="normal" text-anchor="start" >0,31</text>
<text x="1392.06" y="774.5" font-size="16" fill="#f0f0f0" font-weight="normal" text-anchor="start" >0,31</text>
<text x="1460.74" y="774.5" font-size="16" fill="#f0f0f0" font-weight="normal" text-anchor="start" >0,31</text>
<text x="1529.42" y="774.5" font-size="16" fill="#f0f0f0" font-weight="normal" text-anchor="start" >0,31</text>
<text x="1598.1000000000001" y="774.5" font-size="16" fill="#f0f0f0" font-weight="normal" text-anchor="start" >0,31</text>
<rect x="745" y="781.46" width="917.5" height="27.46" fill="#727272" />
<text x="758" y="801.96" font-size="16" fill="#f4f4f4" font-weight="bold" text-anchor="start" textLength="63.5" lengthAdjust="spacingAndGlyphs" >y: CIE31</text>
<text x="911.3" y="801.96" font-size="16" fill="#f0f0f0" font-weight="normal" text-anchor="start" >0,33</text>
<text x="979.98" y="801.96" font-size="16" fill="#f0f0f0" font-weight="normal" text-anchor="start" >0,33</text>
<text x="1048.66" y="801.96" font-size="16" fill="#f0f0f0" font-weight="normal" text-anchor="start" >0,33</text>
<text x="1117.34" y="801.96" font-size="16" fill="#f0f0f0" font-weight="normal" text-anchor="start" >0,33</text>
<text x="1186.02" y="801.96" font-size="16" fill="#f0f0f0" font-weight="normal" text-anchor="start" >0,33</text>
<text x="1254.7" y="801.96" font-size="16" fill="#f0f0f0" font-weight="normal" text-anchor="start" >0,33</text>
<text x="1323.3799999999999" y="801.96" font-size="16" fill="#f0f0f0" font-weight="normal" text-anchor="start" >0,33</text>
<text x="1392.06" y="801.96" font-size="16" fill="#f0f0f0" font-weight="normal" text-anchor="start" >0,33</text>
<text x="1460.74" y="801.96" font-size="16" fill="#f0f0f0" font-weight="normal" text-anchor="start" >0,33</text>
<text x="1529.42" y="801.96" font-size="16" fill="#f0f0f0" font-weight="normal" text-anchor="start" >0,33</text>
<text x="1598.1000000000001" y="801.96" font-size="16" fill="#f0f0f0" font-weight="normal" text-anchor="start" >0,33</text>
<rect x="745" y="808.92" width="917.5" height="27.46" fill="#3b3b3b" />
<text x="758" y="829.42" font-size="16" fill="#f4f4f4" font-weight="bold" text-anchor="start" textLength="10.3" lengthAdjust="spacingAndGlyphs" >Y</text>
<text x="911.3" y="829.42" font-size="16" fill="#f0f0f0" font-weight="normal" text-anchor="start" >0,00</text>
<text x="979.98" y="829.42" font-size="16" fill="#f0f0f0" font-weight="normal" text-anchor="start" >5,68</text>
<text x="1048.66" y="829.42" font-size="16" fill="#f0f0f0" font-weight="normal" text-anchor="start" >21,87</text>
<text x="1117.34" y="829.42" font-size="16" fill="#f0f0f0" font-weight="normal" text-anchor="start" >47,92</text>
<text x="1186.02" y="829.42" font-size="16" fill="#f0f0f0" font-weight="normal" text-anchor="start" >88,85</text>
<text x="1254.7" y="829.42" font-size="16" fill="#f0f0f0" font-weight="normal" text-anchor="start" >143,39</text>
<text x="1323.3799999999999" y="829.42" font-size="16" fill="#f0f0f0" font-weight="normal" text-anchor="start" >211,19</text>
<text x="1392.06" y="829.42" font-size="16" fill="#f0f0f0" font-weight="normal" text-anchor="start" >294,31</text>
<text x="1460.74" y="829.42" font-size="16" fill="#f0f0f0" font-weight="normal" text-anchor="start" >400,35</text>
<text x="1529.42" y="829.42" font-size="16" fill="#f0f0f0" font-weight="normal" text-anchor="start" >528,01</text>
<text x="1598.1000000000001" y="829.42" font-size="16" fill="#f0f0f0" font-weight="normal" text-anchor="start" >661,38</text>
<rect x="745" y="836.38" width="917.5" height="27.46" fill="#727272" />
<text x="758" y="856.88" font-size="16" fill="#f4f4f4" font-weight="bold" text-anchor="start" textLength="66.4" lengthAdjust="spacingAndGlyphs" >Target Y</text>
<text x="911.3" y="856.88" font-size="16" fill="#f0f0f0" font-weight="normal" text-anchor="start" >0,00</text>
<text x="979.98" y="856.88" font-size="16" fill="#f0f0f0" font-weight="normal" text-anchor="start" >6,83</text>
<text x="1048.66" y="856.88" font-size="16" fill="#f0f0f0" font-weight="normal" text-anchor="start" >21,89</text>
<text x="1117.34" y="856.88" font-size="16" fill="#f0f0f0" font-weight="normal" text-anchor="start" >47,80</text>
<text x="1186.02" y="856.88" font-size="16" fill="#f0f0f0" font-weight="normal" text-anchor="start" >87,88</text>
<text x="1254.7" y="856.88" font-size="16" fill="#f0f0f0" font-weight="normal" text-anchor="start" >142,77</text>
<text x="1323.3799999999999" y="856.88" font-size="16" fill="#f0f0f0" font-weight="normal" text-anchor="start" >210,68</text>
<text x="1392.06" y="856.88" font-size="16" fill="#f0f0f0" font-weight="normal" text-anchor="start" >294,45</text>
<text x="1460.74" y="856.88" font-size="16" fill="#f0f0f0" font-weight="normal" text-anchor="start" >399,36</text>
<text x="1529.42" y="856.88" font-size="16" fill="#f0f0f0" font-weight="normal" text-anchor="start" >523,35</text>
<text x="1598.1000000000001" y="856.88" font-size="16" fill="#f0f0f0" font-weight="normal" text-anchor="start" >661,38</text>
<rect x="745" y="863.84" width="917.5" height="27.46" fill="#3b3b3b" />
<text x="758" y="884.34" font-size="16" fill="#f4f4f4" font-weight="bold" text-anchor="start" textLength="135.4" lengthAdjust="spacingAndGlyphs" >Gamma Log/Log</text>
<text x="911.3" y="884.34" font-size="16" fill="#f0f0f0" font-weight="normal" text-anchor="start" >1,28</text>
<text x="979.98" y="884.34" font-size="16" fill="#f0f0f0" font-weight="normal" text-anchor="start" >2,08</text>
<text x="1048.66" y="884.34" font-size="16" fill="#f0f0f0" font-weight="normal" text-anchor="start" >2,12</text>
<text x="1117.34" y="884.34" font-size="16" fill="#f0f0f0" font-weight="normal" text-anchor="start" >2,17</text>
<text x="1186.02" y="884.34" font-size="16" fill="#f0f0f0" font-weight="normal" text-anchor="start" >2,19</text>
<text x="1254.7" y="884.34" font-size="16" fill="#f0f0f0" font-weight="normal" text-anchor="start" >2,22</text>
<text x="1323.3799999999999" y="884.34" font-size="16" fill="#f0f0f0" font-weight="normal" text-anchor="start" >2,23</text>
<text x="1392.06" y="884.34" font-size="16" fill="#f0f0f0" font-weight="normal" text-anchor="start" >2,25</text>
<text x="1460.74" y="884.34" font-size="16" fill="#f0f0f0" font-weight="normal" text-anchor="start" >2,25</text>
<text x="1529.42" y="884.34" font-size="16" fill="#f0f0f0" font-weight="normal" text-anchor="start" >2,18</text>
<text x="1598.1000000000001" y="884.34" font-size="16" fill="#f0f0f0" font-weight="normal" text-anchor="start" >2,27</text>
<rect x="745" y="891.3" width="917.5" height="27.46" fill="#727272" />
<text x="758" y="911.8" font-size="16" fill="#f4f4f4" font-weight="bold" text-anchor="start" textLength="31.1" lengthAdjust="spacingAndGlyphs" >CCT</text>
<text x="911.3" y="911.8" font-size="16" fill="#f0f0f0" font-weight="normal" text-anchor="start" >5456,00</text>
<text x="979.98" y="911.8" font-size="16" fill="#f0f0f0" font-weight="normal" text-anchor="start" >6897,00</text>
<text x="1048.66" y="911.8" font-size="16" fill="#f0f0f0" font-weight="normal" text-anchor="start" >6643,00</text>
<text x="1117.34" y="911.8" font-size="16" fill="#f0f0f0" font-weight="normal" text-anchor="start" >6526,00</text>
<text x="1186.02" y="911.8" font-size="16" fill="#f0f0f0" font-weight="normal" text-anchor="start" >6521,00</text>
<text x="1254.7" y="911.8" font-size="16" fill="#f0f0f0" font-weight="normal" text-anchor="start" >6423,00</text>
<text x="1323.3799999999999" y="911.8" font-size="16" fill="#f0f0f0" font-weight="normal" text-anchor="start" >6537,00</text>
<text x="1392.06" y="911.8" font-size="16" fill="#f0f0f0" font-weight="normal" text-anchor="start" >6528,00</text>
<text x="1460.74" y="911.8" font-size="16" fill="#f0f0f0" font-weight="normal" text-anchor="start" >6511,00</text>
<text x="1529.42" y="911.8" font-size="16" fill="#f0f0f0" font-weight="normal" text-anchor="start" >6539,00</text>
<text x="1598.1000000000001" y="911.8" font-size="16" fill="#f0f0f0" font-weight="normal" text-anchor="start" >6492,00</text>
<rect x="745" y="918.76" width="917.5" height="27.46" fill="#3b3b3b" />
<text x="758" y="939.26" font-size="16" fill="#f4f4f4" font-weight="bold" text-anchor="start" textLength="65.9" lengthAdjust="spacingAndGlyphs" >ΔE 2000</text>
<text x="911.3" y="939.26" font-size="16" fill="#f0f0f0" font-weight="normal" text-anchor="start" >0,00</text>
<text x="979.98" y="939.26" font-size="16" fill="#f0f0f0" font-weight="normal" text-anchor="start" >1,23</text>
<text x="1048.66" y="939.26" font-size="16" fill="#f0f0f0" font-weight="normal" text-anchor="start" >0,73</text>
<text x="1117.34" y="939.26" font-size="16" fill="#f0f0f0" font-weight="normal" text-anchor="start" >0,81</text>
<text x="1186.02" y="939.26" font-size="16" fill="#f0f0f0" font-weight="normal" text-anchor="start" >0,29</text>
<text x="1254.7" y="939.26" font-size="16" fill="#f0f0f0" font-weight="normal" text-anchor="start" >0,62</text>
<text x="1323.3799999999999" y="939.26" font-size="16" fill="#f0f0f0" font-weight="normal" text-anchor="start" >0,43</text>
<text x="1392.06" y="939.26" font-size="16" fill="#f0f0f0" font-weight="normal" text-anchor="start" >0,18</text>
<text x="1460.74" y="939.26" font-size="16" fill="#f0f0f0" font-weight="normal" text-anchor="start" >0,41</text>
<text x="1529.42" y="939.26" font-size="16" fill="#f0f0f0" font-weight="normal" text-anchor="start" >1,20</text>
<text x="1598.1000000000001" y="939.26" font-size="16" fill="#f0f0f0" font-weight="normal" text-anchor="start" >0,58</text>
<rect x="744" y="723" width="919.5" height="224.22000000000003" fill="none" stroke="#141414" stroke-width="1.5"/>
<rect x="0" y="966" width="1920" height="73" fill="#2a2a2a" />
<rect x="1.2" y="969" width="140" height="68.5" rx="4" fill="url(#bbtn)"/>
<rect x="6.9" y="974.8" width="128.5" height="40.2" rx="3.5" fill="rgb(0,0,0)" stroke="rgba(0,0,0,0.25)" stroke-width="1"/>
<text x="71.2" y="1033" font-size="12" fill="#2a2a2a" font-weight="bold" text-anchor="middle" >0</text>
<rect x="143.16" y="969" width="140" height="68.5" rx="4" fill="url(#bbtn)"/>
<rect x="148.85999999999999" y="974.8" width="128.5" height="40.2" rx="3.5" fill="rgb(26,26,26)" stroke="rgba(0,0,0,0.25)" stroke-width="1"/>
<text x="213.16" y="1033" font-size="12" fill="#2a2a2a" font-weight="bold" text-anchor="middle" >10</text>
<rect x="285.12" y="969" width="140" height="68.5" rx="4" fill="url(#bbtn)"/>
<rect x="290.82" y="974.8" width="128.5" height="40.2" rx="3.5" fill="rgb(51,51,51)" stroke="rgba(0,0,0,0.25)" stroke-width="1"/>
<text x="355.12" y="1033" font-size="12" fill="#2a2a2a" font-weight="bold" text-anchor="middle" >20</text>
<rect x="427.08" y="969" width="140" height="68.5" rx="4" fill="url(#bbtn)"/>
<rect x="432.78" y="974.8" width="128.5" height="40.2" rx="3.5" fill="rgb(76,76,76)" stroke="rgba(0,0,0,0.25)" stroke-width="1"/>
<text x="497.08" y="1033" font-size="12" fill="#2a2a2a" font-weight="bold" text-anchor="middle" >30</text>
<rect x="569.0400000000001" y="969" width="140" height="68.5" rx="4" fill="url(#bbtn)"/>
<rect x="574.7400000000001" y="974.8" width="128.5" height="40.2" rx="3.5" fill="rgb(102,102,102)" stroke="rgba(0,0,0,0.25)" stroke-width="1"/>
<text x="639.0400000000001" y="1033" font-size="12" fill="#2a2a2a" font-weight="bold" text-anchor="middle" >40</text>
<rect x="711.0000000000001" y="969" width="140" height="68.5" rx="4" fill="url(#bbtn)"/>
<rect x="716.7000000000002" y="974.8" width="128.5" height="40.2" rx="3.5" fill="rgb(128,128,128)" stroke="rgba(0,0,0,0.25)" stroke-width="1"/>
<text x="781.0000000000001" y="1033" font-size="12" fill="#2a2a2a" font-weight="bold" text-anchor="middle" >50</text>
<rect x="852.96" y="969" width="140" height="68.5" rx="4" fill="url(#bbtn)"/>
<rect x="858.6600000000001" y="974.8" width="128.5" height="40.2" rx="3.5" fill="rgb(153,153,153)" stroke="rgba(0,0,0,0.25)" stroke-width="1"/>
<text x="922.96" y="1033" font-size="12" fill="#2a2a2a" font-weight="bold" text-anchor="middle" >60</text>
<rect x="994.9200000000001" y="969" width="140" height="68.5" rx="4" fill="url(#bbtn)"/>
<rect x="1000.6200000000001" y="974.8" width="128.5" height="40.2" rx="3.5" fill="rgb(178,178,178)" stroke="rgba(0,0,0,0.25)" stroke-width="1"/>
<text x="1064.92" y="1033" font-size="12" fill="#2a2a2a" font-weight="bold" text-anchor="middle" >70</text>
<rect x="1136.88" y="969" width="140" height="68.5" rx="4" fill="url(#bbtn)"/>
<rect x="1142.5800000000002" y="974.8" width="128.5" height="40.2" rx="3.5" fill="rgb(204,204,204)" stroke="rgba(0,0,0,0.25)" stroke-width="1"/>
<text x="1206.88" y="1033" font-size="12" fill="#2a2a2a" font-weight="bold" text-anchor="middle" >80</text>
<rect x="1278.8400000000001" y="969" width="140" height="68.5" rx="4" fill="url(#bbtn)"/>
<rect x="1284.5400000000002" y="974.8" width="128.5" height="40.2" rx="3.5" fill="rgb(230,230,230)" stroke="rgba(0,0,0,0.25)" stroke-width="1"/>
<text x="1348.8400000000001" y="1033" font-size="12" fill="#2a2a2a" font-weight="bold" text-anchor="middle" >90</text>
<rect x="1420.8000000000002" y="969" width="140" height="68.5" rx="4" fill="url(#selg)"/>
<rect x="1426.5000000000002" y="974.8" width="128.5" height="40.2" rx="3.5" fill="rgb(255,255,255)" stroke="rgba(0,0,0,0.25)" stroke-width="1"/>
<text x="1490.8000000000002" y="1033" font-size="12" fill="#ffffff" font-weight="bold" text-anchor="middle" >100</text>
<rect x="1563.5" y="969" width="54" height="19.5" rx="3" fill="url(#cbtn)"/>
<rect x="1563.5" y="989" width="54" height="48.5" rx="3" fill="url(#cbtn)"/>
<circle cx="1590.5" cy="978.5" r="8" fill="#8a8a8a"/>
<path d="M1585.5,981 H1595.5 L1590.5,975.5 Z" fill="#222"/>
<rect x="1574" y="997.5" width="33" height="33" rx="4" fill="url(#stopg)" stroke="#1a1a1a" stroke-width="2.5"/>
<rect x="1582.8" y="1006.6" width="15.4" height="15.1" fill="url(#stopsq)"/>
<rect x="1619.5" y="969" width="50.5" height="33" fill="url(#cbtn)" stroke="#4a4a4a" stroke-width="1"/>
<circle cx="1644.5" cy="986" r="11" fill="#8c8c8c"/>
<rect x="1671" y="969" width="50.5" height="33" fill="url(#cbtn)" stroke="#4a4a4a" stroke-width="1"/>
<circle cx="1696" cy="986" r="11" fill="#8c8c8c"/>
<rect x="1722" y="969" width="50.5" height="33" fill="url(#cbtn)" stroke="#4a4a4a" stroke-width="1"/>
<circle cx="1747" cy="986" r="11" fill="#8c8c8c"/>
<rect x="1772.5" y="969" width="50.5" height="33" fill="url(#cbtn)" stroke="#4a4a4a" stroke-width="1"/>
<circle cx="1797.5" cy="986" r="11" fill="#8c8c8c"/>
<rect x="1823.3" y="969" width="50.5" height="33" fill="url(#cbtn)" stroke="#4a4a4a" stroke-width="1"/>
<circle cx="1848.3" cy="986" r="11" fill="#8c8c8c"/>
<rect x="1874.3" y="969" width="46" height="33" fill="#2c2c2c"/>
<circle cx="1902" cy="985.5" r="11" fill="#353535"/>
<rect x="1639.8" y="981.5" width="9" height="9" fill="#2a2a2a"/>
<path d="M1693,980.5 L1701.5,987 L1693,993.5 Z" fill="#2a2a2a"/>
<path d="M1744.8,980.6 H1741.6 V992 H1744.8 M1751.2,980.6 H1754.4 V992 H1751.2" fill="none" stroke="#252525" stroke-width="2"/>
<rect x="1744.6" y="984.6" width="2" height="2" fill="#252525"/><rect x="1748.6" y="984.6" width="2" height="2" fill="#252525"/>
<g fill="none" stroke="#252525" stroke-width="2.3"><ellipse cx="1794.4" cy="985.8" rx="3.7" ry="2.7"/><ellipse cx="1802.2" cy="985.8" rx="3.7" ry="2.7"/></g>
<g transform="translate(1848.5,986)" fill="none" stroke="#2a2a2a" stroke-width="2.4"><path d="M-6,-1 A6,6 0 0 1 5,-3"/><path d="M6,1 A6,6 0 0 1 -5,3"/></g>
<path d="M1852,979 L1856,983 L1851,984 Z" fill="#2a2a2a"/><path d="M1845,993 L1841,989 L1846,988 Z" fill="#2a2a2a"/>
<rect x="1619.5" y="1004" width="152.5" height="33.5" fill="url(#cbtn)" stroke="#4a4a4a" stroke-width="1"/>
<rect x="1772" y="1004" width="150" height="33.5" fill="url(#cbtn)" stroke="#4a4a4a" stroke-width="1"/>
<circle cx="1654" cy="1021.3" r="10.5" fill="#8c8c8c"/>
<circle cx="1894" cy="1021.3" r="10.5" fill="#8c8c8c"/>
<text x="1654" y="1028.5" font-size="24" fill="#2a2a2a" font-weight="normal" text-anchor="middle" >«</text>
<text x="1894" y="1028.5" font-size="24" fill="#2a2a2a" font-weight="normal" text-anchor="middle" >»</text>
<text x="1684" y="1030" font-size="24" fill="#2e2e2e" font-weight="normal" text-anchor="start" textLength="57" lengthAdjust="spacingAndGlyphs" stroke="#2e2e2e" stroke-width="0.9">Back</text>
<text x="1804.4" y="1030" font-size="24" fill="#2e2e2e" font-weight="normal" text-anchor="start" textLength="58" lengthAdjust="spacingAndGlyphs" stroke="#2e2e2e" stroke-width="0.9">Next</text></svg></body></html>
